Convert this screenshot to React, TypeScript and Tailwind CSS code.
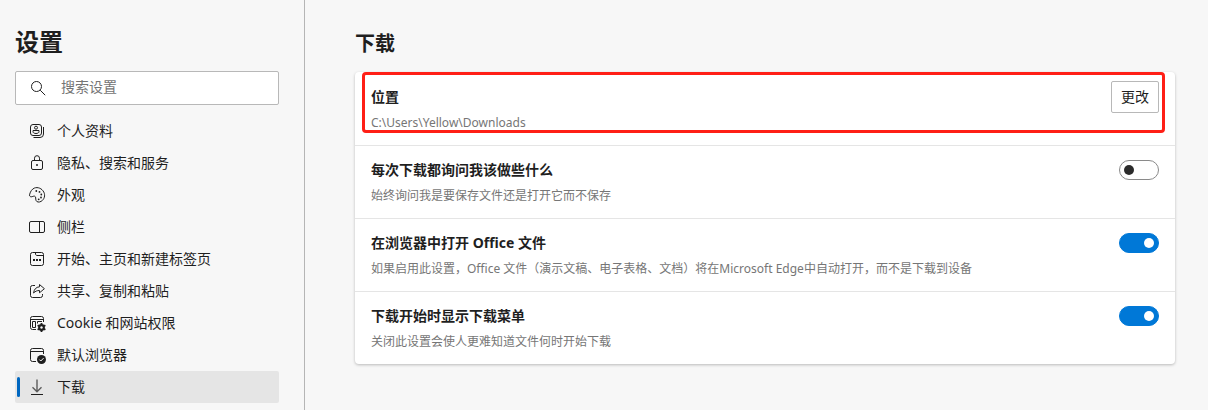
import { useState } from "react";
import type { ReactNode } from "react";

const navItems: { label: string; icon: ReactNode }[] = [
  {
    label: "个人资料",
    icon: (
      <>
        <rect x="1.5" y="1.5" width="11" height="11" rx="2.5" />
        <path d="M14.500 4v7a3.500 3.500 0 0 1-3.500 3.500H4.500" />
        <circle cx="7" cy="4.700" r="1.500" />
        <path d="M4 7.500h6v1c0 1.300-1.200 2-3 2s-3-.7-3-2z" />
      </>
    ),
  },
  {
    label: "隐私、搜索和服务",
    icon: (
      <>
        <rect x="2.500" y="5.500" width="11" height="9" rx="1.500" />
        <path d="M5.500 5.500V3.200a2.500 2.500 0 0 1 5 0v2.300" />
        <circle cx="8" cy="10" r="1" fill="currentColor" stroke="none" />
      </>
    ),
  },
  {
    label: "外观",
    icon: (
      <>
        <path d="M.7 7.200C.1 8.600.8 9.800 2.200 9.800c1.400 0 2.400-1 3.500-.6 1.600.6.6 2.600 1.300 4.200.7 1.800 3 2.200 5.200.9 3.200-1.900 4.300-6 2.600-9.200C12.900 1.400 8.800-.3 5.300 1.100 3 2.100 1.500 4.300.7 7.200z" />
        <g fill="currentColor" stroke="none">
          <circle cx="7.300" cy="4" r=".9" />
          <circle cx="10.500" cy="4.900" r=".9" />
          <circle cx="12.300" cy="7.500" r=".9" />
          <circle cx="12" cy="10.500" r=".9" />
          <circle cx="9.700" cy="12.300" r=".9" />
        </g>
      </>
    ),
  },
  {
    label: "侧栏",
    icon: (
      <>
        <rect x=".5" y="2.500" width="15" height="11" rx="1.500" />
        <path d="M10.500 2.500v11" />
      </>
    ),
  },
  {
    label: "开始、主页和新建标签页",
    icon: (
      <>
        <rect x="1.500" y="1.500" width="13" height="13" rx="2" />
        <path d="M6.500 1.500v1.500c0 .8.700 1.500 1.500 1.500h6.500" />
        <path d="M4 9h2M7 9h2M10 9h2" strokeWidth="2" />
      </>
    ),
  },
  {
    label: "共享、复制和粘贴",
    icon: (
      <>
        <path d="M6 2.500H3.500a2 2 0 0 0-2 2v8a2 2 0 0 0 2 2h8a2 2 0 0 0 2-2V11" />
        <path d="M10.500 1.500v2.300C7 4 5 6.500 4.600 10c1.700-1.800 3.400-2.500 5.900-2.500v2.300L15.400 5.700z" />
      </>
    ),
  },
  {
    label: "Cookie 和网站权限",
    icon: (
      <>
        <path d="M7 14.500H3.500a2 2 0 0 1-2-2v-9a2 2 0 0 1 2-2h9a2 2 0 0 1 2 2V7M1.500 4.500h13" />
        <path d="M3.500 6.500h3v6h-3zM8.500 6.500H13M8.500 6.500v2" />
        <circle cx="12.500" cy="12.500" r="2.200" strokeWidth="2.400" />
        {/* gear teeth */}
        <path
          d="M12.500 8v9M8.600 10.250l7.800 4.500M8.600 14.750l7.800-4.500"
          strokeWidth="1.800"
        />
        <circle cx="12.500" cy="12.500" r="1.200" fill="#f7f7f7" stroke="none" />
      </>
    ),
  },
  {
    label: "默认浏览器",
    icon: (
      <>
        <path d="M7 14.500H3.500a2 2 0 0 1-2-2v-9a2 2 0 0 1 2-2h9a2 2 0 0 1 2 2V7M1.500 4.500h13" />
        <circle cx="12.500" cy="12.500" r="4.500" fill="currentColor" stroke="none" />
        <path d="m10.400 12.600 1.400 1.400 2.800-2.900" stroke="#f7f7f7" />
      </>
    ),
  },
  {
    label: "下载",
    icon: (
      <>
        <path d="M8 .5v12M3.500 8.300 8 12.800l4.500-4.500" stroke="#5c5c5c" strokeWidth="1.400" />
        <path d="M2 15.500h12" />
      </>
    ),
  },
];

const toggles = [
  {
    id: "ask",
    title: "每次下载都询问我该做些什么",
    desc: "始终询问我是要保存文件还是打开它而不保存",
    on: false,
  },
  {
    id: "office",
    title: "在浏览器中打开 Office 文件",
    desc: "如果启用此设置，Office 文件（演示文稿、电子表格、文档）将在Microsoft Edge中自动打开，而不是下载到设备",
    on: true,
  },
  {
    id: "menu",
    title: "下载开始时显示下载菜单",
    desc: "关闭此设置会使人更难知道文件何时开始下载",
    on: true,
  },
];

function Icon({ children }: { children: ReactNode }) {
  return (
    <svg
      viewBox="0 0 16 16"
      className="size-4 shrink-0 overflow-visible"
      fill="none"
      stroke="currentColor"
      strokeLinejoin="round"
      aria-hidden="true"
    >
      {children}
    </svg>
  );
}

function Sidebar() {
  const [active, setActive] = useState("下载");

  return (
    <aside className="w-[305px] shrink-0 border-r border-[#b5b5b5] pl-[15px] pr-[25px] pt-6">
      <h1 className="text-2xl leading-9 font-bold">设置</h1>

      <label className="mt-[11px] flex h-[34px] items-center gap-[15px] rounded-xs border border-[#b8b8b8] bg-white px-[14px]">
        <Icon>
          <circle cx="6.500" cy="6.500" r="5" />
          <path d="m10.200 10.200 5 5" />
        </Icon>
        <input
          type="search"
          aria-label="搜索设置"
          placeholder="搜索设置"
          className="min-w-0 flex-1 bg-transparent pb-0.5 text-sm outline-none placeholder:text-[#757575]"
        />
      </label>

      <nav className="mt-[10px]">
        {navItems.map((item) => (
          <a
            key={item.label}
            href="#"
            onClick={() => setActive(item.label)}
            className={`relative flex h-8 items-center gap-3 rounded-xs px-[14px] text-sm ${
              active === item.label ? "bg-[#e5e5e5]" : "hover:bg-[#ededed]"
            }`}
          >
            {active === item.label && (
              <span className="absolute left-0.5 h-5 w-[3px] rounded-full bg-[#0067c0]" />
            )}
            <Icon>{item.icon}</Icon>
            {item.label}
          </a>
        ))}
      </nav>
    </aside>
  );
}

function SettingText({ id, title, desc }: { id: string; title: string; desc: string }) {
  return (
    <div className="min-w-0">
      <label htmlFor={id} className="block text-sm leading-5 font-bold">
        {title}
      </label>
      <p className="mt-1.5 text-xs leading-5 text-[#767676]">{desc}</p>
    </div>
  );
}

export default function App() {
  return (
    <div className="flex min-h-screen bg-[#f7f7f7] font-['Noto_Sans','Noto_Sans_CJK_SC',sans-serif] text-[#1f1f1f]">
      <Sidebar />

      <main className="min-w-0 flex-1 pt-7 pr-[33px] pb-6 pl-[50px]">
        <h2 className="text-xl leading-8 font-bold">下载</h2>

        <section className="relative mt-3 rounded bg-white shadow-[0_1px_3px_rgba(0,0,0,0.25)]">
          <div className="flex min-h-[73px] items-start justify-between gap-4 px-4 pt-[15px]">
            <SettingText id="location" title="位置" desc="C:\Users\Yellow\Downloads" />
            <button
              id="location"
              type="button"
              className="-mt-1.5 h-8 w-12 shrink-0 rounded-xs border border-[#b8b8b8] bg-white text-sm"
            >
              更改
            </button>
          </div>

          {toggles.map((t) => (
            <div
              key={t.id}
              className="flex min-h-[73px] items-start justify-between gap-4 border-t border-[#e5e5e5] px-4 pt-[14px]"
            >
              <SettingText id={t.id} title={t.title} desc={t.desc} />
              <input
                id={t.id}
                type="checkbox"
                role="switch"
                defaultChecked={t.on}
                className="flex h-5 w-10 shrink-0 appearance-none items-center rounded-full border border-[#8a8a8a] bg-white px-1 before:size-[10px] before:rounded-full before:bg-[#2b2b2b] checked:justify-end checked:border-[#0078d7] checked:bg-[#0078d7] checked:before:bg-white"
              />
            </div>
          ))}

          {/* highlight around the location row */}
          <div className="pointer-events-none absolute top-0 right-2.5 left-[7px] h-[61px] rounded border-3 border-[#ff1f16]" />
        </section>
      </main>
    </div>
  );
}
